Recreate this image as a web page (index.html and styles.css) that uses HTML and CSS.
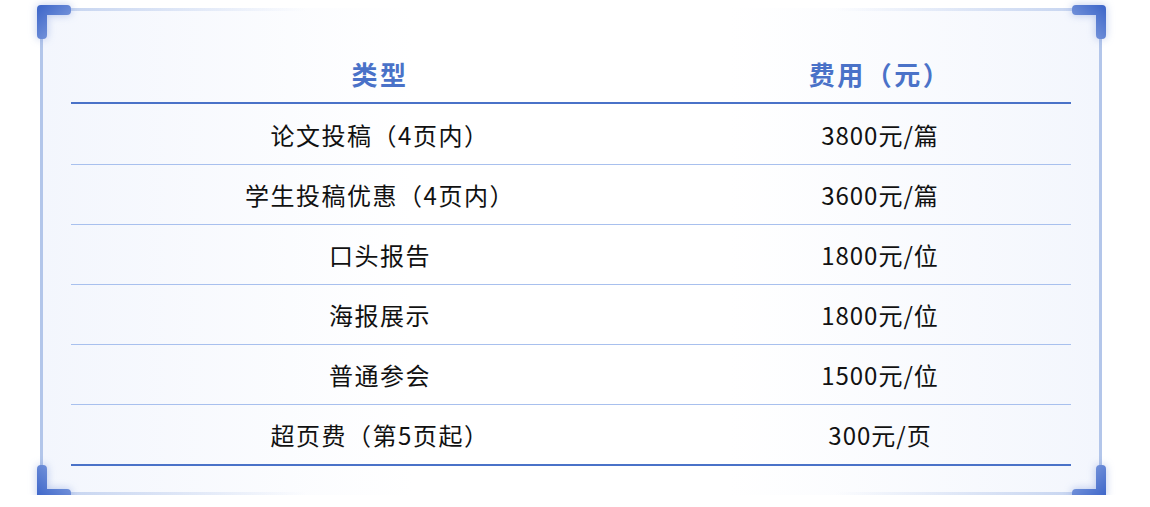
FILE: index.html
```html
<!DOCTYPE html>
<html lang="zh">
<head>
<meta charset="utf-8">
<title>费用</title>
<link rel="stylesheet" href="styles.css">
</head>
<body>
<div class="frame">
  <svg class="corner tl" width="34" height="34" viewBox="0 0 34 34"><defs><linearGradient id="g1" x1="0" y1="0" x2="1" y2="1"><stop offset="0" stop-color="#3b64c8"/><stop offset="1" stop-color="#8ea8e2"/></linearGradient></defs><path d="M4 0 H30 A4 4 0 0 1 34 4 V6 A4 4 0 0 1 30 10 H10 V30 A4 4 0 0 1 6 34 H4 A4 4 0 0 1 0 30 V4 A4 4 0 0 1 4 0 Z" fill="url(#g1)"/></svg>
  <svg class="corner tr" width="34" height="34" viewBox="0 0 34 34"><path d="M4 0 H30 A4 4 0 0 1 34 4 V6 A4 4 0 0 1 30 10 H10 V30 A4 4 0 0 1 6 34 H4 A4 4 0 0 1 0 30 V4 A4 4 0 0 1 4 0 Z" fill="url(#g1)"/></svg>
  <svg class="corner bl" width="34" height="34" viewBox="0 0 34 34"><path d="M4 0 H30 A4 4 0 0 1 34 4 V6 A4 4 0 0 1 30 10 H10 V30 A4 4 0 0 1 6 34 H4 A4 4 0 0 1 0 30 V4 A4 4 0 0 1 4 0 Z" fill="url(#g1)"/></svg>
  <svg class="corner br" width="34" height="34" viewBox="0 0 34 34"><path d="M4 0 H30 A4 4 0 0 1 34 4 V6 A4 4 0 0 1 30 10 H10 V30 A4 4 0 0 1 6 34 H4 A4 4 0 0 1 0 30 V4 A4 4 0 0 1 4 0 Z" fill="url(#g1)"/></svg>
  <table class="fees">
    <thead>
      <tr><th class="col-type">类型</th><th class="col-fee">费用（元）</th></tr>
    </thead>
    <tbody>
      <tr class="first"><td>论文投稿（4页内）</td><td class="fee">3800元/篇</td></tr>
      <tr><td>学生投稿优惠（4页内）</td><td class="fee">3600元/篇</td></tr>
      <tr><td>口头报告</td><td class="fee">1800元/位</td></tr>
      <tr><td>海报展示</td><td class="fee">1800元/位</td></tr>
      <tr><td>普通参会</td><td class="fee">1500元/位</td></tr>
      <tr><td>超页费（第5页起）</td><td class="fee">300元/页</td></tr>
    </tbody>
  </table>
</div>
</body>
</html>
```
FILE: styles.css
```css
html, body {
  margin: 0;
  padding: 0;
  background: #ffffff;
}
body {
  font-family: "Noto Sans CJK SC", "Noto Sans", sans-serif;
  padding: 8px 0 0 40px;
}
.frame {
  position: relative;
  width: 1062px;
  height: 487px;
  box-sizing: border-box;
  border-left: 3px solid #b3c6ea;
  border-right: 3px solid #b3c6ea;
  padding: 36px 28px 0 28px;
  background:
    linear-gradient(to right, #c3d2ef 0%, rgba(195,210,239,0) 25%, rgba(195,210,239,0) 75%, #c3d2ef 100%) top left / 100% 3px no-repeat,
    linear-gradient(to right, #c3d2ef 0%, rgba(195,210,239,0) 25%, rgba(195,210,239,0) 75%, #c3d2ef 100%) bottom left / 100% 3px no-repeat,
    linear-gradient(to right, #f3f6fd 0%, #ffffff 35%, #ffffff 65%, #f3f6fd 100%);
}
.corner {
  position: absolute;
  filter: drop-shadow(0 0 4px rgba(60, 100, 200, 0.35));
}
.corner.tl { left: -6px; top: -3px; }
.corner.tr { right: -7px; top: -3px; transform: scaleX(-1); }
.corner.bl { left: -6px; bottom: -4px; transform: scaleY(-1); }
.corner.br { right: -7px; bottom: -4px; transform: scale(-1, -1); }
.fees {
  width: 1000px;
  border-collapse: collapse;
  table-layout: fixed;
}
.col-type { width: 618px; }
.fees th {
  height: 58px;
  font-size: 26px;
  font-weight: bold;
  color: #4a72c8;
  letter-spacing: 2.5px;
  border-bottom: 2px solid #4a72c8;
  text-align: center;
  padding: 0;
}
.fees td {
  height: 59px;
  font-size: 24px;
  color: #111111;
  letter-spacing: 1.5px;
  text-align: center;
  border-bottom: 1px solid #a8c0ee;
  padding: 0;
}
.fees tr.first td {
  height: 60px;
}
.fees td.fee {
  letter-spacing: 1px;
}
.fees tbody tr:last-child td {
  border-bottom: 2px solid #4a72c8;
}
```
